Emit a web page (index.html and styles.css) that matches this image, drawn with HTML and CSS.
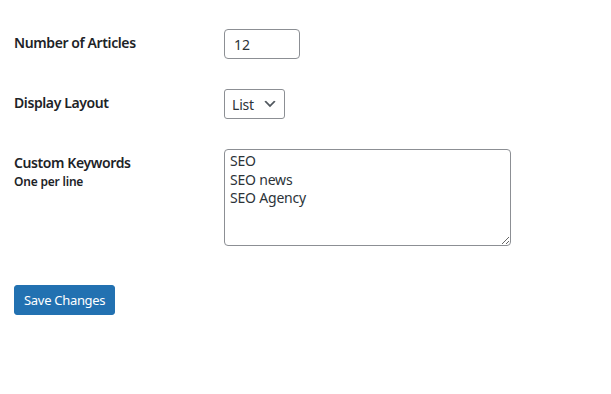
FILE: index.html
```html
<!DOCTYPE html>
<html>
<head>
<meta charset="utf-8">
<link rel="stylesheet" href="styles.css">
</head>
<body>
<form class="settings">
  <div class="form-table">
    <div class="row">
      <div class="th"><label for="num">Number of Articles</label></div>
      <div class="td"><input id="num" class="small-text" type="text" value="12"></div>
    </div>
    <div class="row">
      <div class="th"><label for="layout">Display Layout</label></div>
      <div class="td">
        <div class="select">
          <span class="select-value">List</span>
          <svg class="chev" width="16" height="16" viewBox="0 0 20 20"><path d="M5 6l5 5 5-5 2 1-7 7-7-7z" fill="#50575e"/></svg>
        </div>
      </div>
    </div>
    <div class="row">
      <div class="th">
        <label for="kw">Custom Keywords</label>
        <span class="desc">One per line</span>
      </div>
      <div class="td">
        <textarea id="kw" class="keywords">SEO
SEO news
SEO Agency</textarea>
      </div>
    </div>
  </div>
  <p class="submit"><button type="button" class="button-primary">Save Changes</button></p>
</form>
</body>
</html>
```

FILE: styles.css
```css
html, body {
  margin: 0;
  padding: 0;
  background: #fff;
}
body {
  font-family: "Noto Sans", "Open Sans", sans-serif;
  color: #1d2327;
  font-size: 13px;
}
.settings {
  padding: 14px 0 0 14px;
}
.form-table {
  display: flex;
  flex-direction: column;
}
.row {
  display: grid;
  grid-template-columns: 210px 1fr;
}
.th {
  padding: 20px 10px 20px 0;
  font-weight: 600;
  font-size: 14px;
  line-height: 18px;
  display: flex;
  flex-direction: column;
}
.th label {
  letter-spacing: -0.4px;
}
.desc {
  font-size: 12px;
  line-height: 20px;
  letter-spacing: -0.2px;
}
.td {
  padding: 15px 0;
}
.small-text {
  box-sizing: border-box;
  width: 76px;
  height: 30px;
  margin: 0;
  padding: 0 9px;
  border: 1px solid #8c8f94;
  border-radius: 4px;
  font-family: inherit;
  font-size: 14px;
  color: #2c3338;
  outline: none;
}
.select {
  box-sizing: border-box;
  width: 61px;
  height: 30px;
  border: 1px solid #8c8f94;
  border-radius: 3px;
  display: flex;
  align-items: center;
  justify-content: space-between;
  padding: 0 6px 0 7px;
  font-size: 14px;
  letter-spacing: -0.2px;
  color: #2c3338;
}
.chev {
  display: block;
}
.keywords {
  box-sizing: border-box;
  display: block;
  width: 287px;
  height: 97px;
  margin: 0;
  padding: 2px 5px;
  border: 1px solid #8c8f94;
  border-radius: 4px;
  font-family: inherit;
  font-size: 14px;
  line-height: 18.5px;
  letter-spacing: -0.2px;
  color: #2c3338;
  resize: both;
  outline: none;
}
.submit {
  margin: 0;
  padding: 24px 0 0;
}
.button-primary {
  box-sizing: border-box;
  height: 30px;
  padding: 0 9px;
  white-space: nowrap;
  background: #2271b1;
  border: 1px solid #2271b1;
  border-radius: 3px;
  color: #fff;
  font-family: inherit;
  font-size: 13px;
  letter-spacing: -0.3px;
  cursor: pointer;
}
```
